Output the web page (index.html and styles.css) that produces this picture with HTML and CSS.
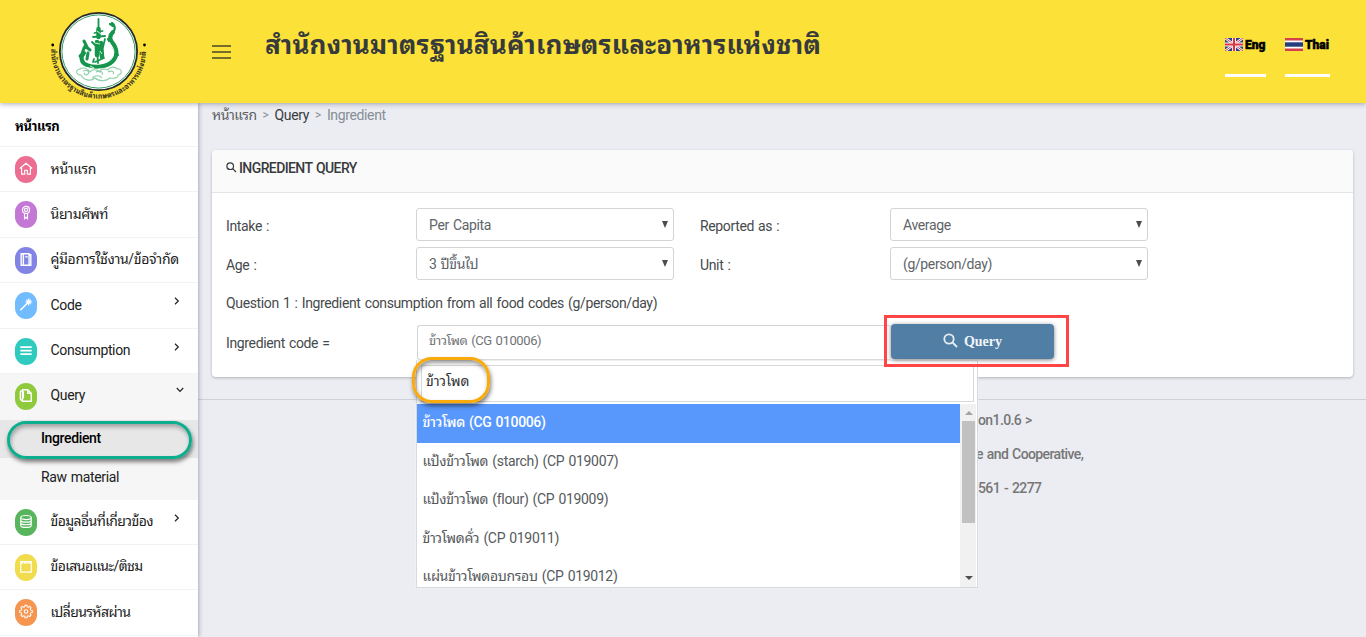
FILE: index.html
```html
<!DOCTYPE html>
<html lang="th">
<head>
<meta charset="utf-8">
<title>Ingredient Query</title>
<link rel="stylesheet" href="styles.css">
</head>
<body>
<header class="topbar">
  <div class="brand">
    <svg class="logo" width="110" height="103" viewBox="44 0 110 103">
      <circle cx="98.5" cy="51.5" r="38.6" fill="#fff" stroke="#26282a" stroke-width="1.8"/>
      <circle cx="98.5" cy="51.5" r="36.6" fill="none" stroke="#2f9c62" stroke-width="1"/>
      <g fill="none" stroke="#16964d" stroke-linecap="round" stroke-linejoin="round">
        <path stroke-width="4" d="M84 53c-4 4-3 10 3 12 8 3 20 2 26-4 6-7 3-14-1-19-3-4-2-7 1-10"/>
        <path stroke-width="2.2" d="M113 32c3-3 2-7-1-9M110 24l3 2M109 41l-1-2M118 55l-2-2"/>
        <path stroke-width="3" d="M81 57l3-9 3-1-3-6M80 56l3-3M85 46l5 4M88 53l-1 6"/>
        <path stroke-width="4.500" d="M98.500 29v8M97 42v13M101 43l1 14"/>
        <path stroke-width="1.800" d="M98.500 19v10M94.500 33l8-2M93 37l12-1M92 42l5 5M105 39l-2 8M95 62l9-4M98 63l-1-14M94 59l-1 3"/>
      </g>
      <path d="M97 31l4 3M95 43l5 1M100 51l2 3M90 66l4 2M109 61l3-3M112 48l2 3" stroke="#d7efdf" fill="none"/>
      <path d="M80 69c-5 1-4 6 1 6 2 5 10 7 14 3 4 4 12 3 15 0 5 1 9-1 8-3 5-1 4-7-1-6-2-3-8-2-9 1-3-2-8-1-8 2-3-3-8-3-10 0-2-4-8-5-10-3zM83 71c4-2 7 1 5 3s-5 0-3-1M96 72c4-2 8 0 6 3M108 72c4-2 7 0 5 2M92 78c3-3 8-3 10 0" fill="none" stroke="#8fcfaa" stroke-width="1.100"/>
      <circle cx="52.700" cy="45" r="1.400"/><circle cx="144.500" cy="45" r="1.400"/>
      <path id="ring" d="M51.050 49A47.500 47.500 0 1 0 145.950 49" fill="none"/>
      <text class="ring-text"><textPath href="#ring" textLength="151" lengthAdjust="spacingAndGlyphs">สำนักงานมาตรฐานสินค้าเกษตรและอาหารแห่งชาติ</textPath></text>
    </svg>
  </div>
  <div class="burger"><i></i><i></i><i></i></div>
  <h1 class="site-title">สำนักงานมาตรฐานสินค้าเกษตรและอาหารแห่งชาติ</h1>
  <nav class="langs">
    <a class="lang lang-en"><svg width="18" height="13" viewBox="0 0 18 13"><path fill="#2b438c" d="M0 0h18v13H0z"/><path d="M0 0l18 13M18 0L0 13" stroke="#fff" stroke-width="2.600"/><path d="M0 0l18 13M18 0L0 13" stroke="#d43f50"/><path d="M9 0v13M0 6.500h18" stroke="#fff" stroke-width="4"/><path d="M9 0v13M0 6.500h18" stroke="#d93640" stroke-width="2.200"/></svg><span>Eng</span></a>
    <a class="lang lang-th"><svg width="18" height="13" viewBox="0 0 18 13"><path fill="#d5404d" d="M0 0h18v13H0z"/><path fill="#fff" d="M0 2.500h18v8H0z"/><path fill="#253d7c" d="M0 4.300h18v4.400H0z"/></svg><span>Thai</span></a>
  </nav>
</header>
<div class="layout">
  <aside class="sidebar">
    <div class="side-head"><b>หน้าแรก</b></div>
    <div class="item"><span class="ico pink"><svg viewBox="0 0 16 16"><path d="M1 8l7-6 7 6M3 7v7.500h3.500V10h3v4.500H13V7"/></svg></span><span>หน้าแรก</span></div>
    <div class="item"><span class="ico purple up"><svg viewBox="0 0 16 16"><circle cx="8" cy="5" r="4"/><circle cx="8" cy="5" r="1.800"/><path d="M6.300 9v6L8 13.500 9.700 15V9"/></svg></span><span>นิยามศัพท์</span></div>
    <div class="item"><span class="ico indigo"><svg viewBox="0 0 16 16"><path stroke-width="1.600" d="M2.500 1.500h9v13h-9zM5 1.500v13M11.500 2.500h2v12h-3M7 5h3"/></svg></span><span>คู่มือการใช้งาน/ข้อจำกัด</span></div>
    <div class="item"><span class="ico blue"><svg viewBox="0 0 16 16"><path d="M1.500 14.500L10 6" stroke-width="1.800"/><path d="M11 1v8M7.500 5h7.500M8.500 2.500l5 5M13.500 2.500l-5 5"/></svg></span><span>Code</span><svg class="chev" viewBox="0 0 6 8"><path d="M1 .8L4.300 4 1 7.200"/></svg></div>
    <div class="item"><span class="ico teal"><svg viewBox="0 0 16 16"><path stroke-width="2" d="M1.500 4h13M1.500 8h13M1.500 12h13"/></svg></span><span>Consumption</span><svg class="chev" viewBox="0 0 6 8"><path d="M1 .8L4.300 4 1 7.200"/></svg></div>
    <div class="item open"><span class="ico green"><svg viewBox="0 0 16 16"><path stroke-width="1.600" d="M4 1.500h6l4 4v9H4zM10 1.500v4h4M4 2.500C1.500 2 1.500 4 1.500 5v6c0 2 .5 2.500 2.500 2.500M4 4h1v7"/></svg></span><span>Query</span><svg class="chev down" viewBox="0 0 8 6"><path d="M.8 1L4 4.300 7.200 1"/></svg></div>
    <div class="sub active"><span>Ingredient</span></div>
    <div class="sub"><span>Raw material</span></div>
    <div class="item related"><span class="ico leaf"><svg viewBox="0 0 16 16"><ellipse cx="8" cy="3.500" rx="6" ry="2.300"/><path d="M2 3.500v9c0 3 12 3 12 0v-9M2 6.500c0 3 12 3 12 0M2 9.500c0 3 12 3 12 0"/></svg></span><span class="tight">ข้อมูลอื่นที่เกี่ยวข้อง</span><svg class="chev" viewBox="0 0 6 8"><path d="M1 .8L4.300 4 1 7.200"/></svg></div>
    <div class="item"><span class="ico yellow"><svg viewBox="0 0 16 16"><path d="M2 2.500h12v12H2z"/><path stroke-width="2.500" stroke-dasharray="2 1" d="M2.500 3.500h11"/></svg></span><span class="tight">ข้อเสนอแนะ/ติชม</span></div>
    <div class="item"><span class="ico orange"><svg viewBox="0 0 16 16"><path d="M6.800 1h2.400l.5 2 1.300.600 1.800-1 1.600 1.600-1 1.800.6 1.300 2 .5v2.400l-2 .5-.6 1.300 1 1.800-1.600 1.600-1.800-1-1.300.600-.5 2H6.800l-.5-2-1.300-.6-1.800 1-1.600-1.600 1-1.800L2 10.700l-2-.5V7.800l2-.5.6-1.300-1-1.800 1.600-1.600 1.800 1L6.300 3z" transform="translate(.8 -.1) scale(.9)"/><circle cx="8" cy="8" r="2"/></svg></span><span class="tight">เปลี่ยนรหัสผ่าน</span></div>
    <div class="mark mark-green"></div>
  </aside>
  <main class="main">
    <div class="crumbs"><span class="c1">หน้าแรก</span><span class="sep">&gt;</span><span class="c2">Query</span><span class="sep">&gt;</span><span>Ingredient</span></div>
    <section class="card">
      <div class="card-head"><svg width="11" height="11" viewBox="0 0 11 11"><circle cx="4.200" cy="4.200" r="3.300"/><path d="M6.700 6.700L10 10"/></svg><span>INGREDIENT QUERY</span></div>
      <div class="form">
        <label>Intake :</label><div class="select"><span>Per Capita</span></div>
        <label>Reported as :</label><div class="select"><span>Average</span></div>
        <label>Age :</label><div class="select"><span>3 ปีขึ้นไป</span></div>
        <label>Unit :</label><div class="select"><span>(g/person/day)</span></div>
        <div class="question">Question 1 : Ingredient consumption from all food codes (g/person/day)</div>
        <label>Ingredient code =</label>
        <div class="code-row">
          <div class="code-input"><span>ข้าวโพด (CG 010006)</span></div>
          <button class="query"><svg width="15" height="15" viewBox="0 0 15 15"><circle cx="6" cy="6" r="4.700"/><path d="M9.500 9.500L14 14"/></svg><span>Query</span></button>
          <div class="popup">
            <div class="search"><span>ข้าวโพด</span></div>
            <div class="results">
              <div class="options">
                <div class="opt sel"><span>ข้าวโพด (CG 010006)</span></div>
                <div class="opt"><span>แป้งข้าวโพด (starch) (CP 019007)</span></div>
                <div class="opt"><span>แป้งข้าวโพด (flour) (CP 019009)</span></div>
                <div class="opt"><span>ข้าวโพดคั่ว (CP 019011)</span></div>
                <div class="opt"><span>แผ่นข้าวโพดอบกรอบ (CP 019012)</span></div>
              </div>
              <div class="scroll"><i class="up-arrow"></i><i class="thumb"></i><i class="down-arrow"></i></div>
            </div>
          </div>
          <div class="mark mark-orange"></div>
          <div class="mark mark-red"></div>
        </div>
      </div>
    </section>
    <footer class="foot"><p>on1.0.6 &gt;</p><p class="ministry">e and Cooperative,</p><p>561 - 2277</p></footer>
  </main>
</div>
</body>
</html>
```
FILE: styles.css
```css
* { box-sizing: border-box; }
body { margin: 0; width: 1366px; height: 637px; overflow: hidden; background: #ecedf3; font: 14px/20px Roboto, "Noto Sans Thai Looped", "Noto Looped Thai", Loma, Waree, Garuda, "Noto Sans", sans-serif; letter-spacing: -.36px; word-spacing: 1px; color: #464a4c; }
span, b, p, h1, label { white-space: nowrap; }
.topbar { height: 103px; background: #fce139; display: flex; position: relative; z-index: 3; box-shadow: 0 1px 5px rgba(40, 42, 70, .4); }
.brand { width: 212px; padding-left: 44px; }
.logo { display: block; }
.ring-text { font-size: 7.500px; font-weight: 700; fill: #35301a; letter-spacing: .2px; }
.burger { width: 53px; padding-top: 45px; display: flex; flex-direction: column; gap: 4px; }
.burger i { width: 19px; height: 2px; background: #776d2b; }
.site-title { margin: 0; padding-top: 26px; font-size: 26px; line-height: 38px; font-weight: 700; letter-spacing: .16px; color: #373a3c; width: 960px; }
.langs { display: flex; gap: 19px; padding-top: 35px; }
.lang { height: 42px; border-bottom: 3px solid #fff; display: flex; gap: 2px; font-size: 12px; font-weight: 900; letter-spacing: 0; color: #000; line-height: 20px; -webkit-text-stroke: .5px #000; }
.lang svg { margin-top: 3px; flex: none; }
.lang-en { width: 41px; }
.lang-th { width: 45px; }
.layout { display: flex; height: 534px; }
.sidebar { width: 198px; flex: none; background: #fff; position: relative; box-shadow: 1px 0 4px rgba(40, 42, 70, .35); color: #212121; }
.side-head { height: 44px; padding: 14px 0 0 15px; border-bottom: 1px solid #f2f2f2; color: #000; font-size: 13px; }
.item { height: 45.400px; border-bottom: 1px solid #f2f2f2; display: flex; align-items: flex-start; padding: 9px 0 0 15px; }
.item > span:nth-child(2) { margin: 2.500px 0 0 13.500px; }
.item > .tight { letter-spacing: -.6px; }
.open { background: #f6f6f6; height: 46px; border: 0; }
.related { height: 45px; }
.ico { width: 22px; height: 27px; border-radius: 11px; display: flex; align-items: center; justify-content: center; flex: none; }
.ico svg { width: 14px; height: 15px; fill: none; stroke: #fff; stroke-width: 1.300; margin-top: -2px; }
.up svg { margin-top: -5px; }
.pink { background: #ec6f92; }
.purple { background: #c378d5; }
.indigo { background: #8184e5; }
.blue { background: #70bcff; }
.teal { background: #2fcbbf; }
.green { background: #8fca3d; }
.leaf { background: #57b65d; }
.yellow { background: #f0dc4d; }
.orange { background: #f59550; }
.chev { width: 6px; height: 8px; fill: none; stroke: #222; stroke-width: 1.200; margin: 5px 18px 0 auto; }
.down { width: 8px; height: 6px; margin: 4px 14px 0 auto; }
.sub { padding: 9px 0 0 41px; background: #f6f6f6; height: 42px; }
.active { background: #e7e7e7; height: 38px; padding-top: 8px; font-weight: 500; color: #000; }
.mark { position: absolute; }
.mark-green { left: 7px; top: 318px; width: 185px; height: 38px; border: 3px solid #0cae8d; border-radius: 19px; box-shadow: 1px 3px 4px rgba(0,0,0,.5), inset 1px 3px 4px rgba(0,0,0,.3); }
.main { flex: 1; padding: 2px 13px 0 14px; }
.crumbs { display: flex; height: 45px; color: #868e96; }
.sep { margin: 0 6px; font-size: 12px; }
.c1 { color: #5b5f62; letter-spacing: -.5px; }
.c2 { color: #373a3c; }
.card { background: #fff; border-radius: 4px; height: 227px; box-shadow: 0 1px 3px rgba(0,0,0,.25); }
.card-head { height: 43px; background: #fafafa; border-bottom: 1px solid #e4e5e7; border-radius: 4px 4px 0 0; display: flex; gap: 2px; padding: 8px 14px; letter-spacing: -.6px; font-weight: 500; color: #373a3c; }
.card-head svg { margin-top: 4px; fill: none; stroke: #373a3c; stroke-width: 1.200; }
.form { display: grid; grid-template-columns: 190px 258px 216px 258px; row-gap: 6px; grid-auto-rows: 33px; padding: 15px 14px; }
.form label:nth-of-type(even) { padding-left: 26px; }
.form label { padding-top: 8px; }
.question { grid-column: 1 / -1; padding-top: 7px; }
.select { border: 1px solid #d3d4d6; border-radius: 3px; padding: 6px 12px; color: #606468; display: flex; justify-content: space-between; letter-spacing: -.36px; }
.select::after { content: ""; border: 3.500px solid transparent; border-top: 7px solid #4b4e50; border-bottom: 0; height: 0; margin: 6px -7px 0 0; }
.code-row { grid-column: 2 / -1; position: relative; display: flex; }
.code-input { margin-left: 1px; width: 474px; height: 35px; border: 1px solid #d3d4d6; border-right: 0; border-radius: 3px; padding: 5px 11px; color: #707376; font-size: 13px; letter-spacing: -.4px; }
.query { position: relative; z-index: 3; top: -1px; width: 163px; height: 35px; border: 0; border-radius: 4px; background: #517ea4; color: #f1f5f8; box-shadow: 0 1px 4px rgba(0,0,0,.5); font: 700 14px "Liberation Serif", serif; display: flex; align-items: center; justify-content: center; gap: 6px; padding: 0; }
.query svg { fill: none; stroke: #e7eef3; stroke-width: 1.800; margin-top: -2px; }
.popup { position: absolute; z-index: 1; left: 0; top: 35px; width: 562px; height: 228px; background: #fff; border: 1px solid #d8d9dc; border-top-color: #eee; padding: 4px 1px 0 0; box-shadow: 0 0 1px #fff; }
.search { margin: 0 2px 0 4px; height: 37px; border: 1px solid #d8d8d8; padding: 5px 4px; color: #333; letter-spacing: -.1px; }
.results { margin-top: 2px; display: flex; height: 183px; overflow: hidden; }
.options { flex: 1; color: #565a5c; letter-spacing: -.33px; }
.opt { height: 38.300px; padding: 8px 5.500px; }
.sel { background: #5897fb; color: #fff; height: 39px; font-weight: 500; letter-spacing: -.38px; }
.scroll { width: 16px; background: #f1f1f1; padding: 7px 2px 0; }
.scroll i { display: block; }
.up-arrow { margin: 0 3px 6px; border: 4px solid transparent; border-bottom-color: #a3a3a3; border-top: 0; width: 0; }
.thumb { height: 102px; background: #c1c1c1; margin-right: -1px; }
.down-arrow { margin: 53px 3px; border: 4px solid transparent; border-top-color: #505050; border-bottom: 0; width: 0; }
.mark-orange { z-index: 2; left: -4px; top: 32px; width: 78px; height: 46px; border: 3px solid #faaa0a; border-radius: 20px; box-shadow: 1px 3px 4px rgba(0,0,0,.5), inset 1px 3px 4px rgba(0,0,0,.4); }
.mark-red { z-index: 4; left: 468px; top: -10px; width: 185px; height: 52px; border: 3px solid #ff4545; }
.foot { margin: 22px -13px 0 -14px; border-top: 1px solid #d0d1d6; padding: 3px 0 0 780px; color: #777; letter-spacing: -.6px; font-weight: 500; }
.foot p { margin: 0; line-height: 34px; }
.foot .ministry { margin-left: -2px; }
```
